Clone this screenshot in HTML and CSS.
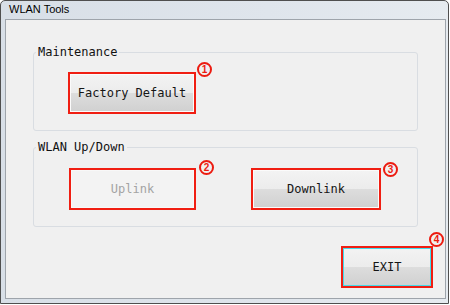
FILE: index.html
```html
<!DOCTYPE html>
<html lang="en">
<head>
    <meta charset="UTF-8">
    <title>WLAN Tools</title>
    <link rel="stylesheet" href="styles.css">
</head>
<body>
    <div class="window">
        <div class="titlebar">WLAN Tools</div>
        <div class="client">
            <fieldset class="group">
                <legend>Maintenance</legend>
                <div class="row row-first">
                    <span class="mark">
                        <button class="btn btn-factory">Factory Default</button>
                        <span class="badge badge-1">1</span>
                    </span>
                </div>
            </fieldset>

            <fieldset class="group group-second">
                <legend>WLAN Up/Down</legend>
                <div class="row row-second">
                    <span class="mark">
                        <button class="btn btn-uplink" disabled>Uplink</button>
                        <span class="badge badge-2">2</span>
                    </span>
                    <span class="mark">
                        <button class="btn btn-downlink">Downlink</button>
                        <span class="badge badge-3">3</span>
                    </span>
                </div>
            </fieldset>

            <div class="footer">
                <span class="mark">
                    <button class="btn btn-exit">EXIT</button>
                    <span class="badge badge-4">4</span>
                </span>
            </div>
        </div>
    </div>
</body>
</html>
```

FILE: styles.css
```css
body {
    margin: 0;
    background-color: #fff;
    font-family: "DejaVu Sans Mono", monospace;
}
.window {
    box-sizing: border-box;
    width: 449px;
    height: 304px;
    border: 1px solid #4f4f4f;
    border-radius: 5px 5px 0 0;
    padding: 0 2px 4px 4px;
    background: linear-gradient(to right, #d8dfe7, #dfe5ec 60%, #e6ebf0);
}
.titlebar {
    height: 18px;
    line-height: 17px;
    padding-left: 4px;
    font-family: "Liberation Sans", Arial, sans-serif;
    font-size: 11px;
    color: #000;
}
.client {
    box-sizing: border-box;
    height: 280px;
    border: 1px solid #9ea4ab;
    background-color: #f0f0f0;
    padding: 25px 0 0 27px;
}
.group {
    width: 385px;
    box-sizing: border-box;
    margin: 0;
    border: 1px solid #d9dde2;
    border-radius: 3px;
    padding: 12px 0 16px 2px;
    min-inline-size: 0;
}
.group-second {
    margin-top: 9px;
    padding-top: 13px;
}
.group legend {
    padding: 0 2px;
    font-size: 12px;
    line-height: 15px;
    color: #111;
}
.row {
    display: flex;
}
.row-first {
    padding-left: 32px;
}
.row-second {
    padding-left: 33px;
    gap: 55px;
}
.footer {
    display: flex;
    justify-content: flex-end;
    margin-top: 19px;
    padding-right: 12px;
}
.mark {
    position: relative;
    display: block;
}
.btn {
    display: block;
    box-sizing: border-box;
    height: 42px;
    margin: 0;
    padding: 0;
    border: 2px solid #f01e12;
    box-shadow: inset 0 0 0 1px #fbfbfb;
    background: linear-gradient(#f3f3f3, #ececec 50%, #dddddd 50%, #d0d0d0);
    font-family: "DejaVu Sans Mono", monospace;
    font-size: 12px;
    color: #151515;
}
.btn-factory {
    width: 128px;
}
.btn-uplink {
    width: 127px;
    background: #f3f3f3;
    box-shadow: inset 0 0 0 1px #f8f8f8;
    color: #a3a3a3;
}
.btn-downlink {
    width: 130px;
}
.btn-exit {
    width: 92px;
    box-shadow: inset 0 0 0 1px #45dbea;
}
.badge {
    position: absolute;
    left: 100%;
    box-sizing: border-box;
    width: 15px;
    height: 15px;
    border: 2px solid #ec1b10;
    border-radius: 50%;
    font-family: "Liberation Sans", Arial, sans-serif;
    font-size: 10px;
    font-weight: bold;
    line-height: 11px;
    text-align: center;
    color: #ec1b10;
    background-color: #f0f0f0;
}
.badge-1 {
    margin-left: 1px;
    top: -10px;
}
.badge-2 {
    margin-left: 3px;
    top: -8px;
}
.badge-3 {
    margin-left: 2px;
    top: -6px;
}
.badge-4 {
    margin-left: -4px;
    top: -14px;
}
```
